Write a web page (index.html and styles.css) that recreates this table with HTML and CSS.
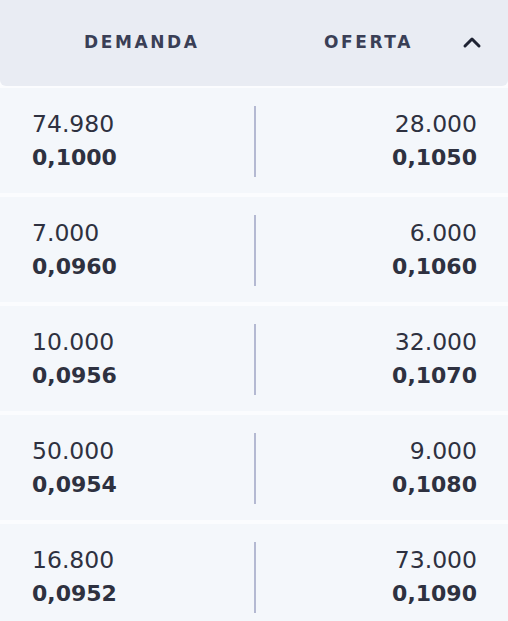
FILE: index.html
```html
<!DOCTYPE html>
<html lang="es">
<head>
<meta charset="utf-8">
<link rel="stylesheet" href="styles.css">
</head>
<body>
<div class="book">
  <div class="head">
    <span class="h-label">DEMANDA</span>
    <span class="h-label h-of">OFERTA</span>
    <svg class="chev" width="22" height="14" viewBox="0 0 22 14"><path d="M4 11 L11 4 L18 11" fill="none" stroke="#1f2333" stroke-width="3" stroke-linecap="round" stroke-linejoin="round"/></svg>
  </div>
  <div class="rows">
    <div class="row"><div class="cell left"><span class="qty">74.980</span><span class="px">0,1000</span></div><div class="sep"></div><div class="cell right"><span class="qty">28.000</span><span class="px">0,1050</span></div></div>
    <div class="row"><div class="cell left"><span class="qty">7.000</span><span class="px">0,0960</span></div><div class="sep"></div><div class="cell right"><span class="qty">6.000</span><span class="px">0,1060</span></div></div>
    <div class="row"><div class="cell left"><span class="qty">10.000</span><span class="px">0,0956</span></div><div class="sep"></div><div class="cell right"><span class="qty">32.000</span><span class="px">0,1070</span></div></div>
    <div class="row"><div class="cell left"><span class="qty">50.000</span><span class="px">0,0954</span></div><div class="sep"></div><div class="cell right"><span class="qty">9.000</span><span class="px">0,1080</span></div></div>
    <div class="row"><div class="cell left"><span class="qty">16.800</span><span class="px">0,0952</span></div><div class="sep"></div><div class="cell right"><span class="qty">73.000</span><span class="px">0,1090</span></div></div>
  </div>
</div>
</body>
</html>
```
FILE: styles.css
```css
html, body {
  margin: 0;
  padding: 0;
  background: #fbfcfe;
  font-family: "DejaVu Sans", "Noto Sans", sans-serif;
  color: #2b2f3d;
}
.book {
  width: 508px;
}
.head {
  height: 86px;
  background: #e9ecf3;
  border-radius: 0 0 6px 6px;
  display: flex;
  align-items: center;
  padding: 0 25px 2px 84px;
  box-sizing: border-box;
}
.h-label {
  font-size: 17px;
  font-weight: 700;
  letter-spacing: 2.6px;
  color: #3a3f56;
}
.h-of {
  margin-left: auto;
}
.chev {
  margin-left: 48px;
}
.rows {
  display: flex;
  flex-direction: column;
  gap: 4px;
  padding-top: 2px;
}
.row {
  height: 105px;
  background: #f4f7fb;
  display: flex;
  align-items: flex-start;
}
.cell {
  flex: 1;
  display: flex;
  flex-direction: column;
  padding-top: 19px;
}
.left {
  padding-left: 32px;
  align-items: flex-start;
}
.right {
  padding-right: 31px;
  align-items: flex-end;
}
.qty, .px {
  font-size: 23.5px;
  line-height: 34px;
  color: #2e3140;
}
.px {
  font-weight: 700;
  font-size: 22px;
}
.sep {
  width: 2px;
  height: 71px;
  margin-top: 18px;
  background: #b4b9d2;
}
```
